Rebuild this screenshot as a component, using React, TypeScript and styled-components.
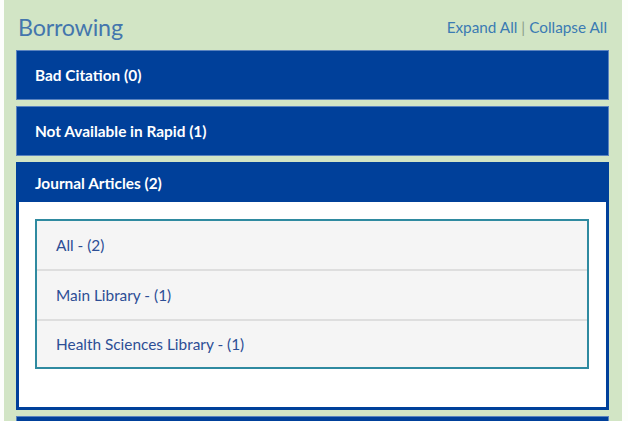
import React from "react";
import styled, { createGlobalStyle } from "styled-components";

const Global = createGlobalStyle`
  html, body { margin: 0; padding: 0; background: #fdfefc; }
  body { font-family: Lato, "Open Sans", "Liberation Sans", sans-serif; }
  * { box-sizing: border-box; }
`;

const Page = styled.div`
  margin-left: 4px;
  width: 618px;
  min-height: 421px;
  background: #d2e5c5;
  padding: 0 13px 20px 12px;
`;

const TitleRow = styled.div`
  height: 50px;
  display: flex;
  align-items: center;
  justify-content: space-between;
  padding: 4px 2px 0 2px;
`;

const Title = styled.h2`
  margin: 0;
  font-size: 23.3px;
  font-weight: 400;
  color: #4476ad;
  letter-spacing: -0.2px;
`;

const Links = styled.div`
  font-size: 15.3px;
  color: #3b7bb3;
  display: flex;
  gap: 4px;
  align-items: center;
`;

const Link = styled.a`
  color: inherit;
  text-decoration: none;
  cursor: pointer;
`;

const Sep = styled.span`
  color: #8aa08a;
`;

const Stack = styled.div`
  display: flex;
  flex-direction: column;
  gap: 6px;
`;

const Bar = styled.div`
  height: 50px;
  background: #00409a;
  border: 1px solid #5a83bf;
  color: #fff;
  font-size: 15.4px;
  font-weight: 700;
  display: flex;
  align-items: center;
  padding-left: 18px;
`;

const Panel = styled.div`
  border: 3px solid #00409a;
  background: #fff;
`;

const PanelHeader = styled.div`
  height: 38px;
  background: #00409a;
  color: #fff;
  font-size: 15.4px;
  font-weight: 700;
  display: flex;
  align-items: center;
  padding-left: 16px;
  margin-top: -1px;
`;

const PanelBody = styled.div`
  padding: 17px 17px 38px 16px;
`;

const List = styled.div`
  border: 2px solid #2f8aa0;
  background: #f5f5f5;
`;

const Row = styled.div<{ $first?: boolean; $h: number }>`
  height: ${(p) => p.$h}px;
  display: flex;
  align-items: center;
  padding-left: 19px;
  font-size: 15.4px;
  color: #2d4e95;
  border-top: ${(p) => (p.$first ? "none" : "2px solid #dedede")};
`;

export default function App() {
  const rows = [
    { label: "All - (2)", h: 48 },
    { label: "Main Library - (1)", h: 50 },
    { label: "Health Sciences Library - (1)", h: 48 },
  ];
  return (
    <>
      <Global />
      <Page>
        <TitleRow>
          <Title>Borrowing</Title>
          <Links>
            <Link>Expand All</Link>
            <Sep>|</Sep>
            <Link>Collapse All</Link>
          </Links>
        </TitleRow>
        <Stack>
          <Bar>Bad Citation (0)</Bar>
          <Bar>Not Available in Rapid (1)</Bar>
          <Panel>
            <PanelHeader>Journal Articles (2)</PanelHeader>
            <PanelBody>
              <List>
                {rows.map((r, i) => (
                  <Row key={r.label} $first={i === 0} $h={r.h}>
                    {r.label}
                  </Row>
                ))}
              </List>
            </PanelBody>
          </Panel>
          <Bar />
        </Stack>
      </Page>
    </>
  );
}
